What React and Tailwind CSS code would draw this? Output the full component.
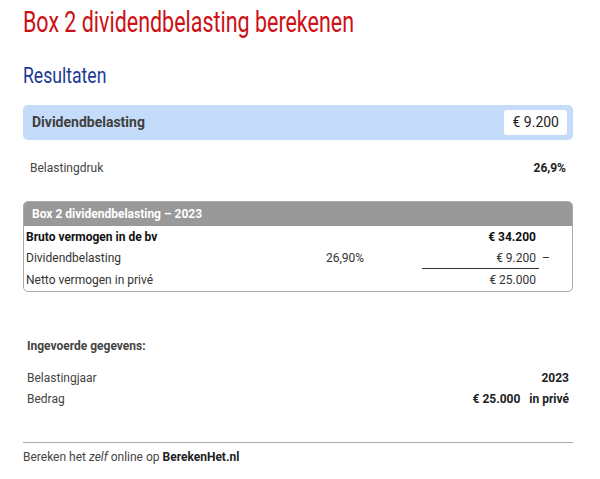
import React from "react";

const headFont = { fontFamily: '"Roboto", sans-serif' };

const tableRows = [
  { label: "Bruto vermogen in de bv", pct: "", amount: "€ 34.200", bold: true },
  { label: "Dividendbelasting", pct: "26,90%", amount: "€ 9.200", minus: true },
  { label: "Netto vermogen in privé", pct: "", amount: "€ 25.000" },
];

const App = () => {
  return (
    <div className="w-[600px] h-[479px] bg-white pl-[23px] pr-[27px] pt-[4px] text-[#444] font-['Roboto',sans-serif]">
      <h1
        className="inline-block origin-left scale-x-[0.74] whitespace-nowrap text-[29px] leading-[36px] text-[#cc1016]"
        style={headFont}
      >
        Box 2 dividendbelasting berekenen
      </h1>
      <h2
        className="mt-[22px] origin-left scale-x-[0.8] whitespace-nowrap text-[22px] leading-[28px] text-[#1b3a94]"
        style={headFont}
      >
        Resultaten
      </h2>

      <div className="mt-[15px] h-[35px] rounded-[5px] bg-[#c4dcfa] flex items-center justify-between pl-[9px] pr-[6px]">
        <span className="text-[14px] font-bold text-[#3f3f3f]">Dividendbelasting</span>
        <span className="bg-white rounded-[3px] px-[8px] h-[25px] flex items-center text-[14px] text-[#222]">
          € 9.200
        </span>
      </div>

      <div className="mt-[19px] flex justify-between px-[7px] text-[12px]">
        <span>Belastingdruk</span>
        <span className="font-bold text-[#222]">26,9%</span>
      </div>

      <div className="mt-[24px] border border-[#aaa] rounded-[5px] overflow-hidden text-[12px]">
        <div className="bg-[#999] text-white font-bold h-[24px] flex items-center px-[8px]">
          Box 2 dividendbelasting – 2023
        </div>
        {tableRows.map((row) => (
          <div key={row.label} className="flex items-center h-[21.5px] px-[2px] text-[#333]">
            <span className={`w-[300px] ${row.bold ? "font-bold text-[#111]" : ""}`}>{row.label}</span>
            <span className="w-[96px]">{row.pct}</span>
            <span
              className={`w-[117px] pr-[3px] text-right h-full flex items-center justify-end ${row.minus ? "border-b border-[#333]" : ""} ${row.bold ? "font-bold text-[#111]" : ""}`}
            >
              {row.amount}
            </span>
            <span className="pl-[3px]">{row.minus ? "–" : ""}</span>
          </div>
        ))}
      </div>

      <div className="mt-[45px] px-[4px] text-[12px]">
        <div className="font-bold">Ingevoerde gegevens:</div>
        <div className="mt-[14px] flex justify-between">
          <span>Belastingjaar</span>
          <span className="font-bold text-[#222]">2023</span>
        </div>
        <div className="mt-[3px] flex justify-between">
          <span>Bedrag</span>
          <span className="font-bold text-[#222]">
            € 25.000 <span className="ml-[6px]">in privé</span>
          </span>
        </div>
      </div>

      <div className="mt-[34px] border-t border-[#aaa] pt-[5px] text-[12px]">
        Bereken het <i>zelf</i> online op <b className="text-[#222]">BerekenHet.nl</b>
      </div>
    </div>
  );
};

export default App;
